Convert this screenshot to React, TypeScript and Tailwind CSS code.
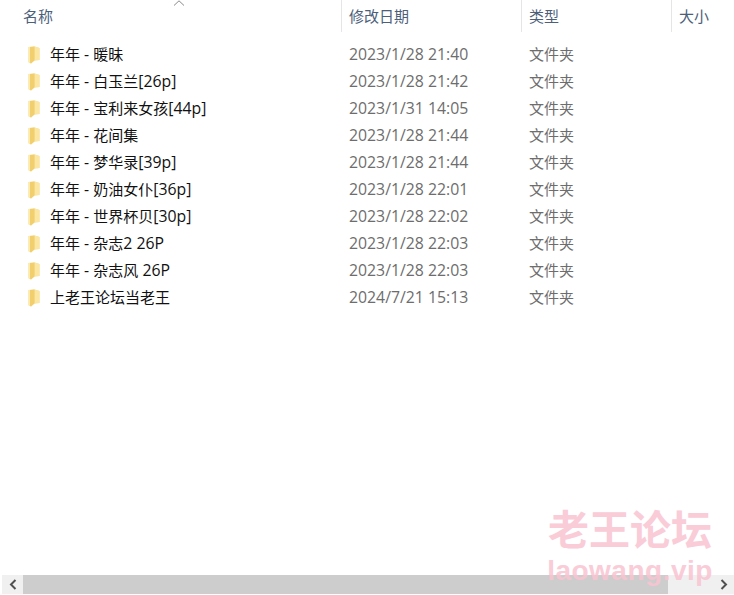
import React from 'react';

const rows = [
  { name: '年年 - 暖昧', date: '2023/1/28 21:40' },
  { name: '年年 - 白玉兰[26p]', date: '2023/1/28 21:42' },
  { name: '年年 - 宝利来女孩[44p]', date: '2023/1/31 14:05' },
  { name: '年年 - 花间集', date: '2023/1/28 21:44' },
  { name: '年年 - 梦华录[39p]', date: '2023/1/28 21:44' },
  { name: '年年 - 奶油女仆[36p]', date: '2023/1/28 22:01' },
  { name: '年年 - 世界杯贝[30p]', date: '2023/1/28 22:02' },
  { name: '年年 - 杂志2 26P', date: '2023/1/28 22:03' },
  { name: '年年 - 杂志风 26P', date: '2023/1/28 22:03' },
  { name: '上老王论坛当老王', date: '2024/7/21 15:13' },
];

const FolderIcon = () => (
  <svg width="14" height="18" viewBox="0 0 14 18" className="shrink-0">
    <path d="M1 1 L7.5 0.5 L12.5 2 L12.5 14 L7 14.5 L4 17.5 L1 16 Z" fill="#f6dc8c" />
    <path d="M7.5 0.5 L12.5 2 L12.5 14 L7.5 14.5 Z" fill="#fbe7a2" />
    <path d="M1 1 L3 1 L3 16.8 L1 16 Z" fill="#fcecb4" />
    <path d="M3 1 L7.5 0.5 L7.5 14.5 L4 17.5 L3 16.8 Z" fill="#f2cf6e" />
  </svg>
);

// CJK runs stay at 15px, the latin between them is a little larger
const Name = ({ text }: { text: string }) => (
  <span className="whitespace-nowrap">
    {text.split(/([\u4e00-\u9fff]+)/).map((part, i) =>
      /[\u4e00-\u9fff]/.test(part) ? (
        <span key={i} className="text-[15px]">{part}</span>
      ) : (
        <span key={i}>{part}</span>
      )
    )}
  </span>
);

export default function App() {
  return (
    <div className="relative w-[734px] h-[595px] overflow-hidden bg-white flex flex-col font-['Open_Sans','Noto_Sans_CJK_SC',sans-serif] text-[15.8px]">
      {/* Header */}
      <div className="flex h-[32px] shrink-0 text-[#4c607a] text-[15px] leading-[32px]">
        <div className="relative w-[342px] pl-[23px] border-r border-[#e5e5e5]">
          名称
          <svg width="12" height="6" viewBox="0 0 12 6" className="absolute left-[173px] top-0" fill="none" stroke="#8a8a8a" strokeWidth="1">
            <path d="M1 5.5 L6 0.8 L11 5.5" />
          </svg>
        </div>
        <div className="w-[180px] pl-[7px] border-r border-[#e5e5e5]">修改日期</div>
        <div className="w-[150px] pl-[7px] border-r border-[#e5e5e5]">类型</div>
        <div className="flex-1 pl-[7px]">大小</div>
      </div>

      {/* Rows */}
      <div className="flex-1 pt-[9px]">
        {rows.map((row) => (
          <div key={row.name} className="flex h-[27px] items-center">
            <div className="w-[342px] pl-[27px] flex items-center gap-[9px] text-[#111111]">
              <FolderIcon />
              <Name text={row.name} />
            </div>
            <div className="w-[180px] pl-[7px] text-[#6d6d6d] whitespace-nowrap">{row.date}</div>
            <div className="pl-[7px] text-[#6d6d6d] text-[15px]">文件夹</div>
          </div>
        ))}
      </div>

      {/* Scrollbar */}
      <div className="h-[19px] mb-[1px] ml-[2px] shrink-0 flex items-stretch bg-[#f0f0f0]">
        <div className="w-[21px] flex items-center justify-center">
          <svg width="8" height="11" viewBox="0 0 8 11" fill="none" stroke="#505050" strokeWidth="2">
            <path d="M6.5 1 L2 5.5 L6.5 10" />
          </svg>
        </div>
        <div className="w-[645px] bg-[#cdcdcd]" />
        <div className="flex-1 flex items-center justify-end pr-[6px]">
          <svg width="8" height="11" viewBox="0 0 8 11" fill="none" stroke="#505050" strokeWidth="2">
            <path d="M1.5 1 L6 5.5 L1.5 10" />
          </svg>
        </div>
      </div>

      {/* Watermark */}
      <div className="absolute left-[544px] top-[502px] w-[172px] flex flex-col items-center text-[#f9c4d2] opacity-85 pointer-events-none">
        <div className="text-[41px] leading-[50px] font-bold whitespace-nowrap font-['Noto_Sans_CJK_SC',sans-serif]">老王论坛</div>
        <div className="mt-[3px] text-[28px] leading-[32px] font-bold whitespace-nowrap font-['Liberation_Sans',sans-serif] tracking-[0.5px]">laowang.vip</div>
      </div>
    </div>
  );
}
